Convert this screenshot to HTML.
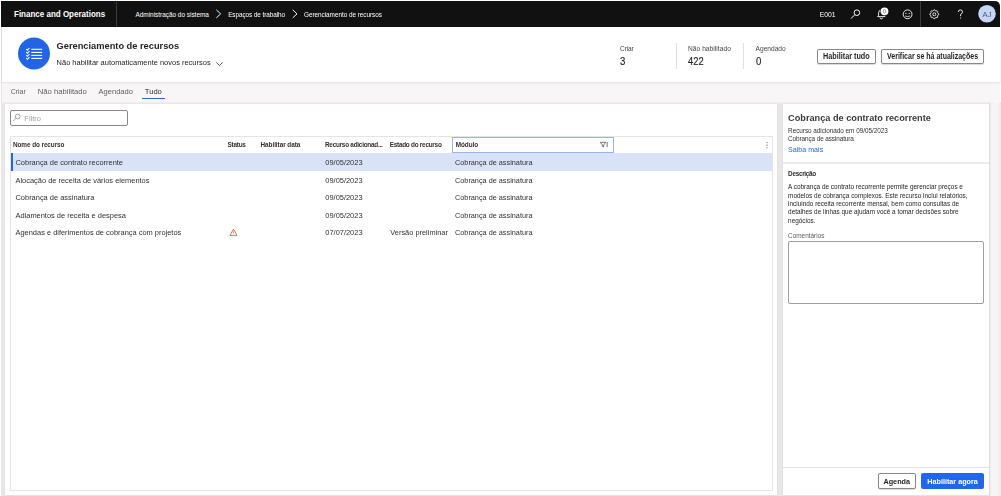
<!DOCTYPE html>
<html><head><meta charset="utf-8"><style>
html,body{margin:0;padding:0;width:1001px;height:496px;overflow:hidden;background:#fff;}
body{position:relative;font-family:"Liberation Sans",sans-serif;}
#root{position:absolute;left:0;top:0;width:1001px;height:496px;filter:blur(0.35px);}
.t{position:absolute;line-height:1;white-space:nowrap;}
.r{position:absolute;box-sizing:border-box;}
.btn{border:1px solid #8a8886;border-radius:2px;background:#fff;box-shadow:0 0.5px 1px rgba(0,0,0,0.15);}
svg{position:absolute;left:0;top:0;}
</style></head><body><div id="root">
<div class="r" style="left:0px;top:0px;width:1001.00px;height:496.00px;background:#ffffff;"></div>
<div class="r" style="left:1px;top:26px;width:999.00px;height:470.00px;background:#f8f6f6;"></div>
<div class="r" style="left:1px;top:26px;width:1.00px;height:470.00px;background:#e6e4e2;"></div>
<div class="r" style="left:1px;top:1px;width:999.00px;height:25.70px;background:#121111;border-top-right-radius:5px;"></div>
<div class="r" style="left:116px;top:1px;width:1.00px;height:25.70px;background:#3b3a39;"></div>
<div class="r" style="left:920px;top:1px;width:1.00px;height:25.70px;background:#3b3a39;"></div>
<div class="t" style="left:13.90px;top:10px;font-size:9.0px;color:#ffffff;font-weight:bold;transform:scaleX(0.8889);transform-origin:0 0;">Finance and Operations</div>
<div class="t" style="left:135.50px;top:12px;font-size:6.42px;color:#ffffff;">Administração do sistema</div>
<div class="t" style="left:228.20px;top:12px;font-size:6.4px;color:#ffffff;letter-spacing:-0.08px;">Espaços de trabalho</div>
<div class="t" style="left:304.00px;top:12px;font-size:6.4px;color:#ffffff;letter-spacing:-0.04px;">Gerenciamento de recursos</div>
<div class="t" style="left:819.70px;top:12px;font-size:6.8px;color:#ffffff;">E001</div>
<div class="r" style="left:2px;top:26.7px;width:998.00px;height:55.30px;background:#ffffff;box-shadow:0 1px 2px rgba(0,0,0,0.09);"></div>
<div class="t" style="left:56.60px;top:42px;font-size:9.28px;color:#252423;font-weight:bold;">Gerenciamento de recursos</div>
<div class="t" style="left:56.60px;top:59px;font-size:7.47px;color:#252423;">Não habilitar automaticamente novos recursos</div>
<div class="t" style="left:620.00px;top:46px;font-size:6.6px;color:#484644;letter-spacing:-0.12px;">Criar</div>
<div class="t" style="left:620.00px;top:57px;font-size:10.4px;color:#201f1e;transform:scaleX(0.92);transform-origin:0 0;-webkit-text-stroke:0.15px #201f1e;">3</div>
<div class="r" style="left:676px;top:43px;width:1.00px;height:26.00px;background:#e1dfdd;"></div>
<div class="t" style="left:688.00px;top:46px;font-size:6.6px;color:#484644;letter-spacing:0.05px;">Não habilitado</div>
<div class="t" style="left:688.00px;top:57px;font-size:10.4px;color:#201f1e;transform:scaleX(0.90);transform-origin:0 0;-webkit-text-stroke:0.15px #201f1e;">422</div>
<div class="r" style="left:743px;top:43px;width:1.00px;height:26.00px;background:#e1dfdd;"></div>
<div class="t" style="left:755.60px;top:46px;font-size:6.6px;color:#484644;">Agendado</div>
<div class="t" style="left:755.60px;top:57px;font-size:10.4px;color:#201f1e;transform:scaleX(0.92);transform-origin:0 0;-webkit-text-stroke:0.15px #201f1e;">0</div>
<div class="r btn" style="left:817px;top:48.5px;width:58.5px;height:15px;"></div>
<div class="t" style="left:823.00px;top:52px;font-size:8.3px;color:#201f1e;font-weight:bold;transform:scaleX(0.8735);transform-origin:0 0;">Habilitar tudo</div>
<div class="r btn" style="left:881px;top:48.5px;width:102.5px;height:15px;"></div>
<div class="t" style="left:886.90px;top:52px;font-size:8.3px;color:#201f1e;font-weight:bold;transform:scaleX(0.8434);transform-origin:0 0;">Verificar se há atualizações</div>
<div class="t" style="left:10.80px;top:89px;font-size:6.9px;color:#605e5c;">Criar</div>
<div class="t" style="left:37.80px;top:88px;font-size:7.68px;color:#605e5c;">Não habilitado</div>
<div class="t" style="left:98.60px;top:88px;font-size:7.54px;color:#605e5c;">Agendado</div>
<div class="t" style="left:144.80px;top:88px;font-size:7.6px;color:#323130;">Tudo</div>
<div class="r" style="left:142px;top:97.5px;width:23.00px;height:1.50px;background:#2266e3;"></div>
<div class="r" style="left:1px;top:102px;width:999.00px;height:394.00px;background:linear-gradient(to bottom,#f1efef 0px,#e9e7e7 3px,#e8e6e6 100%);"></div>
<div class="r" style="left:989px;top:102px;width:12.00px;height:394.00px;background:linear-gradient(to right,#e2e0e0 0px,#f5f3f3 2.5px,#f6f4f4 9px,#e9e7e7 12px);"></div>
<div class="r" style="left:5px;top:104px;width:772.00px;height:390.70px;background:#ffffff;box-shadow:0 0 1.5px rgba(0,0,0,0.08);"></div>
<div class="r" style="left:783px;top:104px;width:206.00px;height:390.70px;background:#ffffff;box-shadow:0 0 1.5px rgba(0,0,0,0.08);"></div>
<div class="r" style="left:10px;top:110px;width:117.5px;height:15.5px;border:1px solid #8a8886;border-radius:2px;"></div>
<div class="t" style="left:24.30px;top:115px;font-size:7.5px;color:#a19f9d;">Filtro</div>
<div class="r" style="left:10px;top:136px;width:762.5px;height:355px;border:1px solid #e6e4e2;"></div>
<div class="t" style="left:13.00px;top:142px;font-size:6.4px;color:#323130;font-weight:bold;letter-spacing:-0.08px;">Nome do recurso</div>
<div class="t" style="left:227.60px;top:142px;font-size:6.4px;color:#323130;font-weight:bold;letter-spacing:-0.25px;">Status</div>
<div class="t" style="left:260.50px;top:142px;font-size:6.4px;color:#323130;font-weight:bold;letter-spacing:-0.05px;">Habilitar data</div>
<div class="t" style="left:325.00px;top:142px;font-size:6.4px;color:#323130;font-weight:bold;letter-spacing:-0.25px;">Recurso adicionad...</div>
<div class="t" style="left:389.70px;top:142px;font-size:6.4px;color:#323130;font-weight:bold;letter-spacing:-0.25px;">Estado do recurso</div>
<div class="r" style="left:452px;top:136.5px;width:161.5px;height:16px;border:1px solid #9ab3ea;"></div>
<div class="t" style="left:455.70px;top:142px;font-size:6.4px;color:#323130;font-weight:bold;letter-spacing:-0.05px;">Módulo</div>
<div class="r" style="left:11px;top:152.7px;width:761.00px;height:18.00px;background:#d8e3f8;"></div>
<div class="r" style="left:11px;top:152.7px;width:2.00px;height:18.00px;background:#2266e3;"></div>
<div class="t" style="left:15.50px;top:159px;font-size:7.45px;color:#323130;">Cobrança de contrato recorrente</div>
<div class="t" style="left:325.30px;top:159px;font-size:7.45px;color:#323130;">09/05/2023</div>
<div class="t" style="left:455.00px;top:159px;font-size:7.3px;color:#323130;">Cobrança de assinatura</div>
<div class="t" style="left:15.50px;top:177px;font-size:7.45px;color:#323130;">Alocação de receita de vários elementos</div>
<div class="t" style="left:325.30px;top:177px;font-size:7.45px;color:#323130;">09/05/2023</div>
<div class="t" style="left:455.00px;top:177px;font-size:7.3px;color:#323130;">Cobrança de assinatura</div>
<div class="t" style="left:15.50px;top:194px;font-size:7.45px;color:#323130;">Cobrança de assinatura</div>
<div class="t" style="left:325.30px;top:194px;font-size:7.45px;color:#323130;">09/05/2023</div>
<div class="t" style="left:455.00px;top:194px;font-size:7.3px;color:#323130;">Cobrança de assinatura</div>
<div class="t" style="left:15.50px;top:212px;font-size:7.45px;color:#323130;">Adiamentos de receita e despesa</div>
<div class="t" style="left:325.30px;top:212px;font-size:7.45px;color:#323130;">09/05/2023</div>
<div class="t" style="left:455.00px;top:212px;font-size:7.3px;color:#323130;">Cobrança de assinatura</div>
<div class="t" style="left:15.50px;top:229px;font-size:7.45px;color:#323130;">Agendas e diferimentos de cobrança com projetos</div>
<div class="t" style="left:325.30px;top:229px;font-size:7.45px;color:#323130;">07/07/2023</div>
<div class="t" style="left:390.30px;top:229px;font-size:7.42px;color:#323130;">Versão preliminar</div>
<div class="t" style="left:455.00px;top:229px;font-size:7.3px;color:#323130;">Cobrança de assinatura</div>
<div class="t" style="left:788.10px;top:114px;font-size:9.18px;color:#3b3a39;font-weight:bold;">Cobrança de contrato recorrente</div>
<div class="t" style="left:788.10px;top:128px;font-size:6.4px;color:#323130;letter-spacing:-0.04px;">Recurso adicionado em 09/05/2023</div>
<div class="t" style="left:788.10px;top:136px;font-size:6.4px;color:#323130;letter-spacing:-0.1px;">Cobrança de assinatura</div>
<div class="t" style="left:788.10px;top:147px;font-size:7.1px;color:#2266e3;">Saiba mais</div>
<div class="r" style="left:782px;top:162px;width:207.00px;height:1.50px;background:#edebe9;"></div>
<div class="t" style="left:788.10px;top:171px;font-size:6.4px;color:#323130;font-weight:bold;letter-spacing:-0.3px;">Descrição</div>
<div class="t" style="left:788.10px;top:184px;font-size:6.42px;color:#252423;">A cobrança de contrato recorrente permite gerenciar preços e</div>
<div class="t" style="left:788.10px;top:193px;font-size:6.42px;color:#252423;">modelos de cobrança complexos. Este recurso inclui relatórios,</div>
<div class="t" style="left:788.10px;top:201px;font-size:6.42px;color:#252423;">incluindo receita recorrente mensal, bem como consultas de</div>
<div class="t" style="left:788.10px;top:209px;font-size:6.42px;color:#252423;">detalhes de linhas que ajudam você a tomar decisões sobre</div>
<div class="t" style="left:788.10px;top:218px;font-size:6.42px;color:#252423;">negócios.</div>
<div class="t" style="left:788.10px;top:233px;font-size:6.42px;color:#605e5c;">Comentários</div>
<div class="r" style="left:788px;top:241px;width:195.5px;height:63px;border:1px solid #a19f9d;border-radius:2px;"></div>
<div class="r" style="left:782px;top:467px;width:207.00px;height:1.00px;background:#e1dfdd;"></div>
<div class="r btn" style="left:877.5px;top:473px;width:38.5px;height:16px;"></div>
<div class="t" style="left:883.50px;top:478px;font-size:7.23px;color:#201f1e;font-weight:bold;">Agenda</div>
<div class="r" style="left:921px;top:473px;width:63px;height:16px;background:#2167ec;border-radius:2px;"></div>
<div class="t" style="left:927.30px;top:478px;font-size:7.23px;color:#ffffff;font-weight:bold;">Habilitar agora</div>
<svg width="1001" height="496" viewBox="0 0 1001 496">
<polyline points="216.3,9.8 220.6,13.9 216.3,17.9" fill="none" stroke="#fff" stroke-width="0.95"/>
<polyline points="292.7,9.8 297,13.9 292.7,17.9" fill="none" stroke="#fff" stroke-width="0.95"/>
<circle cx="856.9" cy="12.7" r="2.8" fill="none" stroke="#fff" stroke-width="0.95"/>
<line x1="854.9" y1="14.7" x2="851" y2="18.6" stroke="#fff" stroke-width="1"/>
<path d="M877.6,16.6 L878.6,15.2 L878.6,12.8 A2.7,2.7 0 0 1 884,12.8 L884,15.2 L885,16.6 Z" fill="none" stroke="#fff" stroke-width="0.9"/>
<path d="M880,17.6 A1.3,1.3 0 0 0 882.6,17.6" fill="none" stroke="#fff" stroke-width="0.9"/>
<circle cx="884.5" cy="11.3" r="4.5" fill="#121111"/><circle cx="884.5" cy="11.3" r="3.9" fill="#fff"/>
<ellipse cx="884.5" cy="11.3" rx="1.3" ry="1.8" fill="none" stroke="#7a8aa0" stroke-width="0.8"/>
<circle cx="907.6" cy="14.3" r="4.4" fill="none" stroke="#fff" stroke-width="0.9"/>
<line x1="905.2" y1="13.4" x2="906.6" y2="13.4" stroke="#fff" stroke-width="0.8"/><line x1="908.6" y1="13.4" x2="910" y2="13.4" stroke="#fff" stroke-width="0.8"/>
<path d="M905.3,16 Q907.6,17.2 909.9,16" fill="none" stroke="#fff" stroke-width="0.8"/>
<path d="M933.86,9.77 L934.74,9.77 L935.35,10.81 L936.00,11.08 L937.15,10.77 L937.78,11.40 L937.47,12.55 L937.74,13.20 L938.78,13.81 L938.78,14.69 L937.74,15.30 L937.47,15.95 L937.78,17.10 L937.15,17.73 L936.00,17.42 L935.35,17.69 L934.74,18.73 L933.86,18.73 L933.25,17.69 L932.60,17.42 L931.45,17.73 L930.82,17.10 L931.13,15.95 L930.86,15.30 L929.82,14.69 L929.82,13.81 L930.86,13.20 L931.13,12.55 L930.82,11.40 L931.45,10.77 L932.60,11.08 L933.25,10.81 Z" fill="none" stroke="#fff" stroke-width="0.85"/>
<circle cx="934.3" cy="14.25" r="1.5" fill="none" stroke="#fff" stroke-width="0.85"/>
<path d="M958.3,11.9 Q958.3,9.9 960.4,9.9 Q962.5,9.9 962.5,11.9 Q962.5,13.3 960.6,14.4 L960.6,16.2" fill="none" stroke="#fff" stroke-width="0.9"/>
<circle cx="960.6" cy="18" r="0.6" fill="#fff"/>
<circle cx="987" cy="13.8" r="8.8" fill="#c3d6f5"/>
<text x="987" y="16.5" font-family="Liberation Sans" font-size="7.6" fill="#505a6e" text-anchor="middle">AJ</text>
<circle cx="34" cy="53.5" r="16" fill="#2165e6"/>
<line x1="31.3" y1="49.3" x2="42.2" y2="49.3" stroke="#fff" stroke-width="1.1"/>
<polyline points="26.2,49.099999999999994 27.4,50.199999999999996 29.4,48.0" fill="none" stroke="#fff" stroke-width="1.1"/>
<line x1="31.3" y1="52.4" x2="42.2" y2="52.4" stroke="#fff" stroke-width="1.1"/>
<polyline points="26.2,52.199999999999996 27.4,53.3 29.4,51.1" fill="none" stroke="#fff" stroke-width="1.1"/>
<line x1="31.3" y1="55.4" x2="42.2" y2="55.4" stroke="#fff" stroke-width="1.1"/>
<polyline points="26.2,55.199999999999996 27.4,56.3 29.4,54.1" fill="none" stroke="#fff" stroke-width="1.1"/>
<line x1="31.3" y1="58.4" x2="42.2" y2="58.4" stroke="#fff" stroke-width="1.1"/>
<polyline points="26.2,58.199999999999996 27.4,59.3 29.4,57.1" fill="none" stroke="#fff" stroke-width="1.1"/>
<polyline points="216.3,62.3 219.5,65.5 222.7,62.3" fill="none" stroke="#484644" stroke-width="0.9"/>
<circle cx="17.7" cy="116.5" r="2.4" fill="none" stroke="#8a8886" stroke-width="0.8"/>
<line x1="16" y1="118.3" x2="13.3" y2="121" stroke="#8a8886" stroke-width="0.8"/>
<path d="M600.2,142.3 H605.8 L603.6,144.9 V147 L602.4,146.3 V144.9 Z" fill="none" stroke="#605e5c" stroke-width="0.85"/>
<line x1="607.2" y1="142" x2="607.2" y2="147.2" stroke="#605e5c" stroke-width="0.85"/>
<circle cx="767" cy="142.6" r="0.6" fill="#605e5c"/><circle cx="767" cy="145.2" r="0.6" fill="#605e5c"/><circle cx="767" cy="147.8" r="0.6" fill="#605e5c"/>
<path d="M233.5,229.1 L237,235.4 L230,235.4 Z" fill="none" stroke="#e0592a" stroke-width="0.85" stroke-linejoin="round"/>
<line x1="233.5" y1="231.4" x2="233.5" y2="233.3" stroke="#e0592a" stroke-width="0.7"/>
</svg>
</div></body></html>
